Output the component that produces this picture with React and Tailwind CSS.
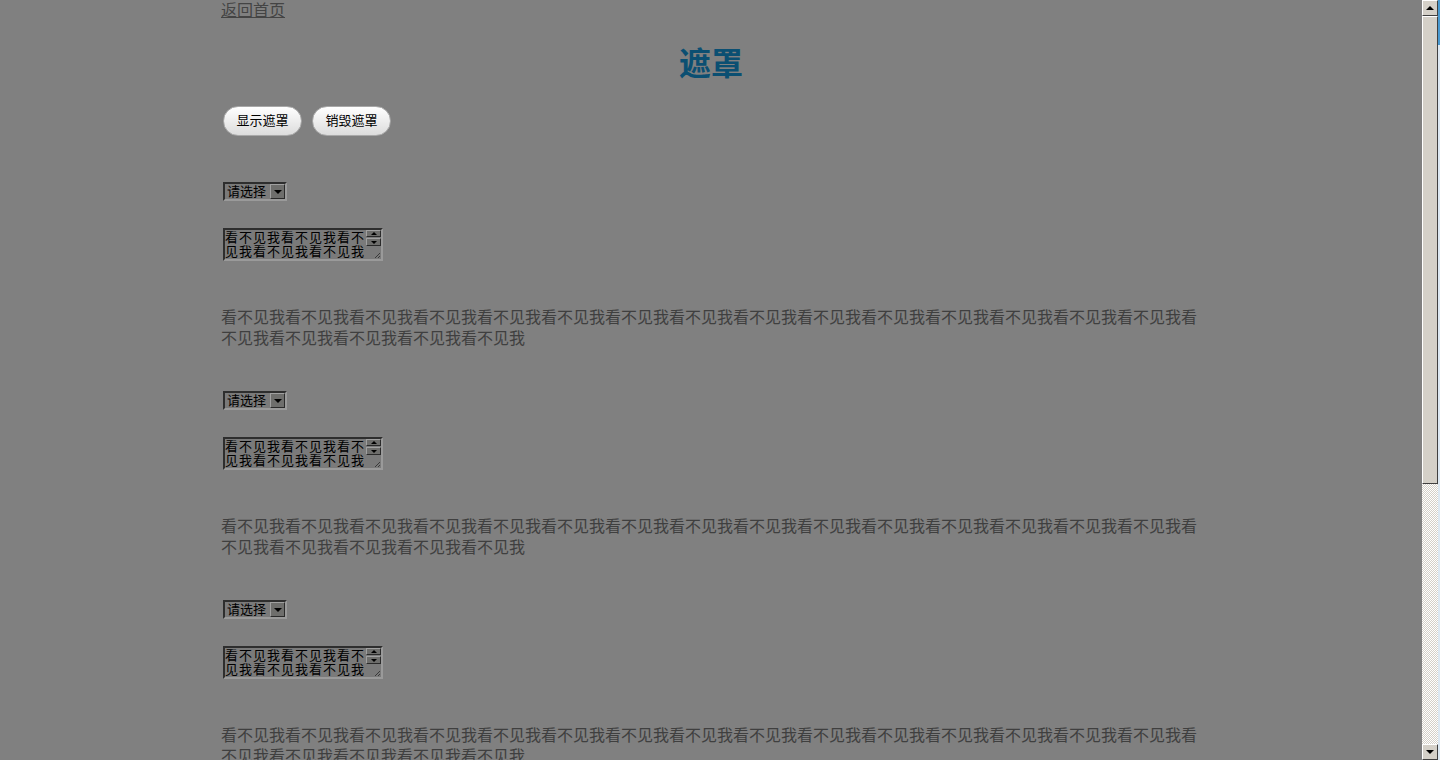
const TEXT = "看不见我".repeat(20);

function FakeSelect() {
  return (
    <div className="ml-[2px] flex h-[19px] w-[64px] border-2 border-t-[#2e2e2e] border-l-[#2e2e2e] border-r-[#9a9a9a] border-b-[#9a9a9a] bg-[#7a7a7a]">
      <div className="flex flex-1 items-center pl-[2px] text-[13px] leading-none text-black">
        请选择
      </div>
      <div className="flex w-[15px] items-center justify-center border border-t-[#a0a0a0] border-l-[#a0a0a0] border-r-[#2a2a2a] border-b-[#2a2a2a] bg-[#6e6e6c]">
        <span className="h-0 w-0 border-x-[4px] border-t-[4px] border-x-transparent border-t-black" />
      </div>
    </div>
  );
}

function FakeTextarea() {
  return (
    <div className="ml-[2px] flex h-[33px] w-[160px] border-2 border-t-[#2e2e2e] border-l-[#2e2e2e] border-r-[#9a9a9a] border-b-[#9a9a9a] bg-[#7a7a7a]">
      <div className="h-full w-[141px] shrink-0 overflow-hidden break-all pt-[1px] text-[13px] leading-[14px] tracking-[1px] text-black">
        看不见我看不见我看不见我看不见我看不见我
      </div>
      <div className="relative flex w-[15px] shrink-0 flex-col gap-[1px]">
        <div className="flex h-[7px] items-center justify-center border border-t-[#a0a0a0] border-l-[#a0a0a0] border-r-[#2a2a2a] border-b-[#2a2a2a] bg-[#6e6e6c]">
          <span className="h-0 w-0 border-x-[3px] border-b-[3px] border-x-transparent border-b-black" />
        </div>
        <div className="flex h-[8px] items-center justify-center border border-t-[#a0a0a0] border-l-[#a0a0a0] border-r-[#2a2a2a] border-b-[#2a2a2a] bg-[#6e6e6c]">
          <span className="h-0 w-0 border-x-[3px] border-t-[3px] border-x-transparent border-t-black" />
        </div>
        <svg className="absolute bottom-0 right-0" width="8" height="8" viewBox="0 0 8 8">
          <path d="M7 2 L2 7 M7 5 L5 7" stroke="#3a3a3a" strokeWidth="1" />
        </svg>
      </div>
    </div>
  );
}

function Block() {
  return (
    <div className="flex flex-col">
      <FakeSelect />
      <div className="mt-[27px]">
        <FakeTextarea />
      </div>
      <p className="mt-[46px] break-all text-[16px] leading-[21px] text-[#3f3f3f]">
        {TEXT}
      </p>
      <div className="h-[42px]" />
    </div>
  );
}

function ScrollButton({ down }) {
  return (
    <div className="flex h-[16px] items-center justify-center border border-t-white border-l-white border-r-[#404040] border-b-[#404040] bg-[#d4d0c8]">
      {down ? (
        <span className="h-0 w-0 border-x-[4px] border-t-[4px] border-x-transparent border-t-black" />
      ) : (
        <span className="h-0 w-0 border-x-[4px] border-b-[4px] border-x-transparent border-b-black" />
      )}
    </div>
  );
}

export default function App() {
  return (
    <div className="flex h-[760px] w-[1440px] overflow-hidden bg-[#808080] font-[Liberation_Sans,Noto_Sans_CJK_SC,sans-serif]">
      <main className="h-full flex-1 overflow-hidden">
        <div className="mx-auto w-[980px]">
          <a
            href="#"
            className="block text-[16px] leading-[21px] text-[#444] underline"
          >
            返回首页
          </a>
          <h1 className="mt-[24px] text-center text-[32px] font-bold leading-[38px] text-[#0b4f72]">
            遮罩
          </h1>
          <div className="mt-[23px] flex gap-[10px] pl-[2px]">
            <button className="h-[30px] w-[79px] rounded-full border border-[#a8a8a8] bg-gradient-to-b from-white to-[#dcdcdc] text-[13px] text-black">
              显示遮罩
            </button>
            <button className="h-[30px] w-[79px] rounded-full border border-[#a8a8a8] bg-gradient-to-b from-white to-[#dcdcdc] text-[13px] text-black">
              销毁遮罩
            </button>
          </div>
          <div className="mt-[46px] flex flex-col">
            <Block />
            <Block />
            <Block />
          </div>
        </div>
      </main>
      <div className="flex h-full w-[16px] flex-col">
        <ScrollButton />
        <div className="h-[468px] border border-t-white border-l-white border-r-[#404040] border-b-[#404040] bg-[#d4d0c8]" />
        <div className="flex-1 bg-[repeating-conic-gradient(#d4d0c8_0_25%,#ffffff_0_50%)] bg-[length:2px_2px]" />
        <ScrollButton down />
      </div>
      <div className="flex h-full w-[2px] flex-col">
        <div className="h-[45px] bg-[#4a9ad0]" />
        <div className="flex-1 bg-[#dce8f2]" />
      </div>
    </div>
  );
}
